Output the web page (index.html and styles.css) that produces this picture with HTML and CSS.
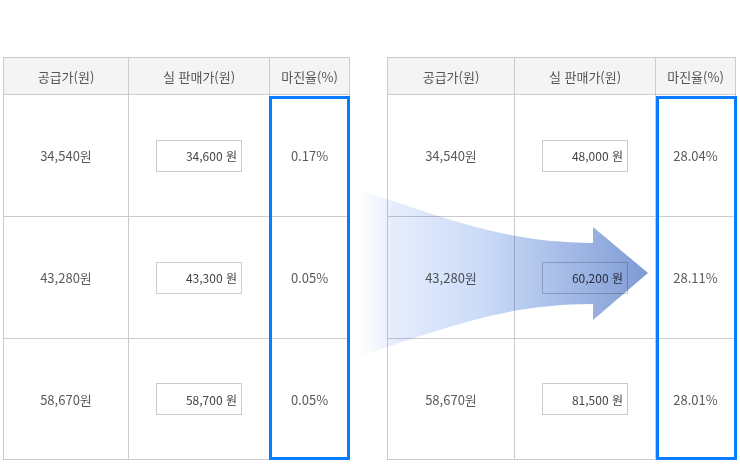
FILE: index.html
```html
<!DOCTYPE html>
<html lang="ko">
<head>
<meta charset="utf-8">
<title>마진율 비교</title>
<link rel="stylesheet" href="styles.css">
</head>
<body>
<div class="page">
  <div class="tbl tbl-left">
    <div class="cell head">공급가(원)</div>
    <div class="cell head">실 판매가(원)</div>
    <div class="cell head">마진율(%)</div>

    <div class="cell">34,540원</div>
    <div class="cell"><div class="field">34,600 원</div></div>
    <div class="cell">0.17%</div>

    <div class="cell">43,280원</div>
    <div class="cell"><div class="field">43,300 원</div></div>
    <div class="cell">0.05%</div>

    <div class="cell">58,670원</div>
    <div class="cell"><div class="field">58,700 원</div></div>
    <div class="cell">0.05%</div>

    <div class="highlight"></div>
  </div>

  <div class="tbl tbl-right">
    <div class="cell head">공급가(원)</div>
    <div class="cell head">실 판매가(원)</div>
    <div class="cell head">마진율(%)</div>

    <div class="cell">34,540원</div>
    <div class="cell"><div class="field">48,000 원</div></div>
    <div class="cell">28.04%</div>

    <div class="cell">43,280원</div>
    <div class="cell"><div class="field">60,200 원</div></div>
    <div class="cell">28.11%</div>

    <div class="cell">58,670원</div>
    <div class="cell"><div class="field">81,500 원</div></div>
    <div class="cell">28.01%</div>

    <div class="highlight"></div>
  </div>

  <svg class="arrow" width="740" height="466" viewBox="0 0 740 466" aria-hidden="true">
    <defs>
      <linearGradient id="ag" x1="358" y1="0" x2="648" y2="0" gradientUnits="userSpaceOnUse">
        <stop offset="0" stop-color="#e8effc" stop-opacity="0"/>
        <stop offset="0.12" stop-color="#e1eafc" stop-opacity="0.85"/>
        <stop offset="0.45" stop-color="#c8d9f7"/>
        <stop offset="0.8" stop-color="#9ab2e2"/>
        <stop offset="1" stop-color="#7e9ad3"/>
      </linearGradient>
    </defs>
    <path d="M358,190 C440,215 500,243 593,243 L593,227 L648,273 L593,320 L593,304 C500,304 440,331 358,356 Z" fill="url(#ag)"/>
  </svg>
</div>
</body>
</html>
```

FILE: styles.css
```css
html, body {
  margin: 0;
  padding: 0;
  background: #fff;
}

body {
  font-family: "Noto Sans CJK KR", "Noto Sans", sans-serif;
  font-size: 12px;
  color: #555;
}

.page {
  position: relative;
  width: 740px;
  height: 466px;
  box-sizing: border-box;
  display: flex;
  align-items: flex-start;
  gap: 37px;
  padding: 57px 0 0 3px;
}

.tbl {
  position: relative;
  display: grid;
  grid-template-rows: 37px 122px 122px 121px;
  border-top: 1px solid #cccccc;
  border-left: 1px solid #cccccc;
}

.tbl-left {
  grid-template-columns: 125px 141px 80px;
}

.tbl-right {
  grid-template-columns: 127px 141px 80px;
}

.cell {
  box-sizing: border-box;
  border-right: 1px solid #cccccc;
  border-bottom: 1px solid #cccccc;
  display: flex;
  align-items: center;
  justify-content: center;
  font-size: 13px;
  color: #5a5a5a;
}

.cell.head {
  background: #f4f4f4;
  font-size: 13px;
  color: #555;
}

.field {
  box-sizing: border-box;
  width: 86px;
  height: 32px;
  border: 1px solid #cccccc;
  display: flex;
  align-items: center;
  justify-content: flex-end;
  padding-right: 4px;
  font-size: 12px;
  color: #444;
}

.highlight {
  position: absolute;
  top: 38px;
  height: 364px;
  box-sizing: border-box;
  border: 3px solid #0a7cff;
}

.tbl-left .highlight {
  left: 265px;
  width: 81px;
}

.tbl-right .highlight {
  left: 268px;
  width: 81px;
}

.arrow {
  position: absolute;
  left: 0;
  top: 0;
  pointer-events: none;
  mix-blend-mode: multiply;
}
```
